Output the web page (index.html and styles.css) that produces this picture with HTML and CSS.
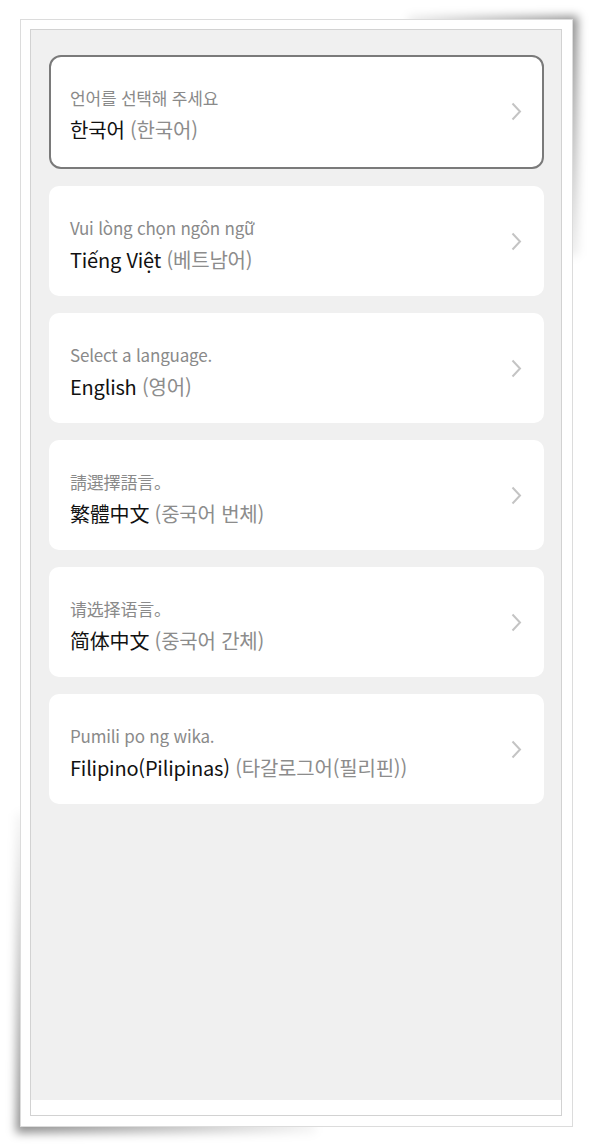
FILE: index.html
```html
<!DOCTYPE html>
<html lang="ko">

<head>
    <meta charset="UTF-8">
    <meta name="viewport" content="width=device-width, initial-scale=1.0">
    <title>언어 선택</title>
    <link rel="stylesheet" href="styles.css">
</head>

<body>
    <div class="paper">
        <div class="screen">
            <div class="list">
                <div class="lang-card active">
                    <div class="text-box">
                        <p class="label">언어를 선택해 주세요</p>
                        <p class="value">한국어 <span class="sub">(한국어)</span></p>
                    </div>
                    <svg class="arrow" width="11" height="19" viewBox="0 0 11 19">
                        <polyline points="1.5,1.5 9,9.5 1.5,17.5" fill="none" stroke="#c4c4c4" stroke-width="2" />
                    </svg>
                </div>
                <div class="lang-card">
                    <div class="text-box">
                        <p class="label">Vui lòng chọn ngôn ngữ</p>
                        <p class="value">Tiếng Việt <span class="sub">(베트남어)</span></p>
                    </div>
                    <svg class="arrow" width="11" height="19" viewBox="0 0 11 19">
                        <polyline points="1.5,1.5 9,9.5 1.5,17.5" fill="none" stroke="#c4c4c4" stroke-width="2" />
                    </svg>
                </div>
                <div class="lang-card">
                    <div class="text-box">
                        <p class="label">Select a language.</p>
                        <p class="value">English <span class="sub">(영어)</span></p>
                    </div>
                    <svg class="arrow" width="11" height="19" viewBox="0 0 11 19">
                        <polyline points="1.5,1.5 9,9.5 1.5,17.5" fill="none" stroke="#c4c4c4" stroke-width="2" />
                    </svg>
                </div>
                <div class="lang-card">
                    <div class="text-box">
                        <p class="label tc">請選擇語言。</p>
                        <p class="value tc">繁體中文 <span class="sub">(중국어 번체)</span></p>
                    </div>
                    <svg class="arrow" width="11" height="19" viewBox="0 0 11 19">
                        <polyline points="1.5,1.5 9,9.5 1.5,17.5" fill="none" stroke="#c4c4c4" stroke-width="2" />
                    </svg>
                </div>
                <div class="lang-card">
                    <div class="text-box">
                        <p class="label sc">请选择语言。</p>
                        <p class="value sc">简体中文 <span class="sub">(중국어 간체)</span></p>
                    </div>
                    <svg class="arrow" width="11" height="19" viewBox="0 0 11 19">
                        <polyline points="1.5,1.5 9,9.5 1.5,17.5" fill="none" stroke="#c4c4c4" stroke-width="2" />
                    </svg>
                </div>
                <div class="lang-card">
                    <div class="text-box">
                        <p class="label">Pumili po ng wika.</p>
                        <p class="value">Filipino(Pilipinas) <span class="sub">(타갈로그어(필리핀))</span></p>
                    </div>
                    <svg class="arrow" width="11" height="19" viewBox="0 0 11 19">
                        <polyline points="1.5,1.5 9,9.5 1.5,17.5" fill="none" stroke="#c4c4c4" stroke-width="2" />
                    </svg>
                </div>
            </div>
            <div class="bottom-bar"></div>
        </div>
    </div>
</body>

</html>
```

FILE: styles.css
```css
* {
    box-sizing: border-box;
}

body {
    margin: 0;
    padding: 19px 19px 20px 20px;
    background-color: #ffffff;
    font-family: "Noto Sans CJK KR", "Noto Sans", sans-serif;
}

.paper {
    position: relative;
    width: 553px;
    height: 1108px;
    background-color: #ffffff;
    border: 1px solid #dcdcdc;
    padding: 9px 10px 10px 9px;
}

/* curled paper shadows, blurred so they fade out along the edges */
.paper::before,
.paper::after {
    content: "";
    position: absolute;
    z-index: -1;
    filter: blur(5px);
}

.paper::before {
    top: -4px;
    right: -6px;
    width: 170px;
    height: 240px;
    background: linear-gradient(to bottom left, rgba(0, 0, 0, 0.45), rgba(0, 0, 0, 0) 60%);
}

.paper::after {
    bottom: -7px;
    left: -5px;
    width: 300px;
    height: 320px;
    background: linear-gradient(to top right, rgba(0, 0, 0, 0.45), rgba(0, 0, 0, 0) 55%);
}

.screen {
    width: 100%;
    height: 100%;
    border: 1px solid #d2d2d2;
    display: flex;
    flex-direction: column;
    background-color: #ffffff;
}

.list {
    flex: 1;
    background-color: #f0f0f0;
    padding: 25px 17px 0 18px;
    display: flex;
    flex-direction: column;
    gap: 17px;
}

.bottom-bar {
    height: 15px;
}

.lang-card {
    height: 110px;
    background-color: #ffffff;
    border-radius: 10px;
    display: flex;
    justify-content: space-between;
    align-items: flex-start;
    padding: 31px 22px 0 21px;
}

.lang-card.active {
    height: 114px;
    border: 2px solid #7a7a7a;
    border-radius: 12px;
    padding: 30px 20px 0 19px;
}

.text-box {
    display: flex;
    flex-direction: column;
    gap: 7px;
}

p {
    margin: 0;
}

.label {
    font-size: 17px;
    line-height: 22px;
    color: #8a8a8a;
    letter-spacing: -0.2px;
}

.value {
    font-size: 20px;
    line-height: 28px;
    color: #111111;
    letter-spacing: -0.2px;
}

.sub {
    color: #8c8c8c;
}

.tc {
    font-family: "Noto Sans CJK TC", "Noto Sans CJK KR", sans-serif;
}

.sc {
    font-family: "Noto Sans CJK SC", "Noto Sans CJK KR", sans-serif;
}

.tc .sub,
.sc .sub {
    font-family: "Noto Sans CJK KR", sans-serif;
}

.arrow {
    margin-top: 15px;
    flex-shrink: 0;
}
```
